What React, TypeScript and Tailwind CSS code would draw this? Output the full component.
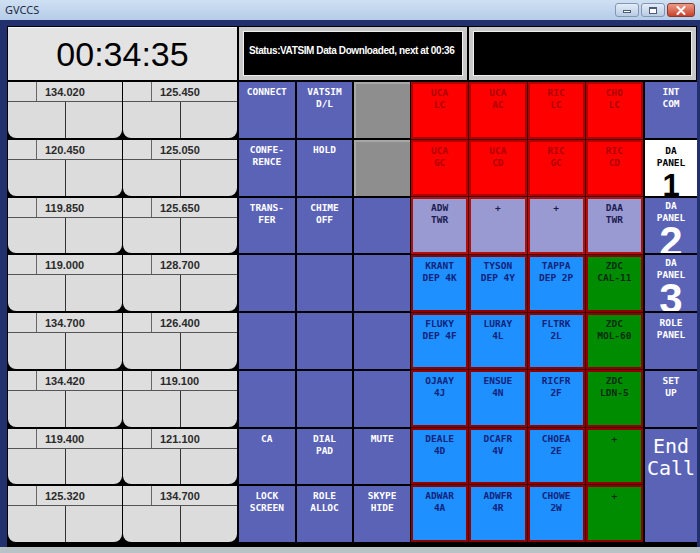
import React from "react";

const mono = "font-['DejaVu_Sans_Mono',monospace]";
const sans = "font-['Liberation_Sans',Arial,sans-serif]";

const freqs: [string, string][] = [
    ["134.020", "125.450"],
    ["120.450", "125.050"],
    ["119.850", "125.650"],
    ["119.000", "128.700"],
    ["134.700", "126.400"],
    ["134.420", "119.100"],
    ["119.400", "121.100"],
    ["125.320", "134.700"],
];

// function buttons, 3 per row; "gray" means an empty grey key
const funcs: string[] = [
    "CONNECT", "VATSIM\nD/L", "gray",
    "CONFE-\nRENCE", "HOLD", "gray",
    "TRANS-\nFER", "CHIME\nOFF", "",
    "", "", "",
    "", "", "",
    "", "", "",
    "CA", "DIAL\nPAD", "MUTE",
    "LOCK\nSCREEN", "ROLE\nALLOC", "SKYPE\nHIDE",
];

type Da = {label: string; kind: "red" | "lav" | "blue" | "green"};

const da: Da[] = [
    {label: "UCA\nLC", kind: "red"}, {label: "UCA\nAC", kind: "red"}, {label: "RIC\nLC", kind: "red"}, {label: "CHO\nLC", kind: "red"},
    {label: "UCA\nGC", kind: "red"}, {label: "UCA\nCD", kind: "red"}, {label: "RIC\nGC", kind: "red"}, {label: "RIC\nCD", kind: "red"},
    {label: "ADW\nTWR", kind: "lav"}, {label: "+", kind: "lav"}, {label: "+", kind: "lav"}, {label: "DAA\nTWR", kind: "lav"},
    {label: "KRANT\nDEP 4K", kind: "blue"}, {label: "TYSON\nDEP 4Y", kind: "blue"}, {label: "TAPPA\nDEP 2P", kind: "blue"}, {label: "ZDC\nCAL-11", kind: "green"},
    {label: "FLUKY\nDEP 4F", kind: "blue"}, {label: "LURAY\n4L", kind: "blue"}, {label: "FLTRK\n2L", kind: "blue"}, {label: "ZDC\nMOL-60", kind: "green"},
    {label: "OJAAY\n4J", kind: "blue"}, {label: "ENSUE\n4N", kind: "blue"}, {label: "RICFR\n2F", kind: "blue"}, {label: "ZDC\nLDN-5", kind: "green"},
    {label: "DEALE\n4D", kind: "blue"}, {label: "DCAFR\n4V", kind: "blue"}, {label: "CHOEA\n2E", kind: "blue"}, {label: "+", kind: "green"},
    {label: "ADWAR\n4A", kind: "blue"}, {label: "ADWFR\n4R", kind: "blue"}, {label: "CHOWE\n2W", kind: "blue"}, {label: "+", kind: "green"},
];

const daStyle = {
    red: "bg-[#ff0000] text-[#b00000] border-[#b00000]",
    lav: "bg-[#9a9ad2] text-[#1c1c50] border-[#b01010]",
    blue: "bg-[#1e90ff] text-[#13237a] border-[#900000]",
    green: "bg-[#008c00] text-[#0b2e12] border-[#900000]",
};

function FreqCell({freq}: {freq: string}) {
    return (
        <div className="flex flex-col">
            <div className="flex h-[20px] bg-[#dedede] border-b border-[#555]">
                <div className="w-[29px] border-r border-[#666]"/>
                <div className={`flex-1 pl-[8px] text-[11px] font-bold leading-[20px] text-[#2a2a2a] ${sans}`}>
                    {freq}
                </div>
            </div>
            <div className="flex flex-1">
                <div className="flex-1 bg-[#dcdcdc] border-r border-[#333] rounded-bl-[8px]"/>
                <div className="flex-1 bg-[#dcdcdc] rounded-br-[8px]"/>
            </div>
        </div>
    );
}

function FuncKey({label}: {label: string}) {
    if (label === "gray") {
        return <div className="bg-[#8e8e8e] border-t-2 border-l-2 border-[#a8a8a8]"/>;
    }
    return (
        <div className={`bg-[#5b63b7] text-white text-[9.5px] font-bold leading-[12px] text-center whitespace-pre-line pt-[4px] ${mono}`}>
            {label}
        </div>
    );
}

function PanelKey({n, active}: {n: string; active?: boolean}) {
    if (active) {
        return (
            <div className="overflow-hidden text-center bg-white text-black">
                <div className={`text-[9.5px] font-bold leading-[12px] pt-[5px] whitespace-pre-line ${mono}`}>
                    {"DA\nPANEL"}
                </div>
                <div className={`text-[31px] font-bold leading-none mt-[1px] ${sans}`}>{n}</div>
            </div>
        );
    }
    // the big digit runs past the bottom of the key, as in the original
    return (
        <div className="overflow-hidden text-center bg-[#5b63b7] text-white">
            <div className={`text-[9.5px] font-bold leading-[12px] pt-[2px] whitespace-pre-line ${mono}`}>
                {"DA\nPANEL"}
            </div>
            <div className={`text-[42px] font-bold leading-[35px] ${sans}`}>{n}</div>
        </div>
    );
}

function SideKey({label}: {label: string}) {
    return (
        <div
            className={`bg-[#5b63b7] text-white text-[9.5px] font-bold leading-[12px] text-center whitespace-pre-line pt-[4px] ${mono}`}>
            {label}
        </div>
    );
}

export default function App() {
    return (
        <div className="w-[700px] h-[553px] overflow-hidden bg-[#22306e] flex flex-col">
            {/* title bar */}
            <div className="h-[20px] flex items-center bg-gradient-to-b from-[#cfe0f3] to-[#b5cce8] pl-[5px] pr-[5px]">
                <span className="text-[11px] text-[#1d2b3c] font-['Noto_Sans',sans-serif]">GVCCS</span>
                <div className="ml-auto flex items-center gap-[2px]">
                    <div className="w-[24px] h-[14px] rounded-[3px] border border-[#8396b3] bg-gradient-to-b from-[#e4edf8] to-[#b9cbe2] flex items-center justify-center">
                        <div className="w-[8px] h-[3px] border border-[#4a5c78] bg-white mt-[3px]"/>
                    </div>
                    <div className="w-[24px] h-[14px] rounded-[3px] border border-[#8396b3] bg-gradient-to-b from-[#e4edf8] to-[#b9cbe2] flex items-center justify-center">
                        <div className="w-[8px] h-[7px] border border-[#4a5c78] border-t-2 bg-white"/>
                    </div>
                    <div className="w-[28px] h-[14px] rounded-[3px] border border-[#8a3a2a] bg-gradient-to-b from-[#ea9a88] to-[#c8412c] flex items-center justify-center">
                        <svg width="10" height="9" viewBox="0 0 10 9">
                            <path d="M1.5 1 L8.5 8 M8.5 1 L1.5 8" stroke="#fff" strokeWidth="2" strokeLinecap="round"/>
                        </svg>
                    </div>
                </div>
            </div>

            <div className="h-[6px]"/>

            <div className="flex">
                <div className="w-[7px] bg-[#22306e]"/>
                <div className="w-[690px] bg-black flex flex-col pl-[1px]">
                    {/* top row */}
                    <div className="flex h-[56px] pt-[1px] gap-[2px]">
                        <div className={`w-[229px] h-[53px] bg-[#e3e3e3] border-t border-[#f4f4f4] flex items-center justify-center text-[34px] text-black ${sans}`}>
                            00:34:35
                        </div>
                        <div className="w-[228px] h-[53px] bg-[#c9c9c9] p-[4px]">
                            <div className="h-full bg-black border border-[#efefef] px-[5px] pt-[4px]">
                                <span className={`text-[10px] font-bold text-white whitespace-nowrap tracking-[-0.4px] ${sans}`}>
                                    Status:VATSIM Data Downloaded, next at 00:36
                                </span>
                            </div>
                        </div>
                        <div className="w-[227px] h-[53px] bg-[#c9c9c9] p-[4px]">
                            <div className="h-full bg-black border border-[#efefef]"/>
                        </div>
                    </div>

                    {/* main panels */}
                    <div className="flex h-[460px]">
                        <div className="w-[231px] grid grid-cols-2 grid-rows-8 gap-x-[1px] gap-y-[2px] pr-[2px]">
                            {freqs.flatMap(([a, b], i) => [
                                <FreqCell key={`${i}a`} freq={a}/>,
                                <FreqCell key={`${i}b`} freq={b}/>,
                            ])}
                        </div>
                        <div className="w-[172px] grid grid-cols-3 grid-rows-8 gap-x-[2px] gap-y-[2px] pr-[1px]">
                            {funcs.map((f, i) => (
                                <FuncKey key={i} label={f}/>
                            ))}
                        </div>
                        <div className="w-[232px] grid grid-cols-4 grid-rows-8 gap-[1px] bg-[#420000]">
                            {da.map((d, i) => (
                                <div key={i}
                                     className={`border-[2px] text-[9.5px] font-bold leading-[12px] text-center whitespace-pre-line pt-[3px] ${mono} ${daStyle[d.kind]}`}>
                                    {d.label}
                                </div>
                            ))}
                        </div>
                        <div className="w-[54px] grid grid-rows-8 gap-y-[2px] pl-[2px]">
                            <SideKey label={"INT\nCOM"}/>
                            <PanelKey n="1" active/>
                            <PanelKey n="2"/>
                            <PanelKey n="3"/>
                            <SideKey label={"ROLE\nPANEL"}/>
                            <SideKey label={"SET\nUP"}/>
                            <div className={`row-span-2 bg-[#5b63b7] text-white text-[20px] leading-[22px] text-center whitespace-pre-line pt-[6px] ${mono}`}>
                                {"End\nCall"}
                            </div>
                        </div>
                    </div>
                    <div className="h-[5px]"/>
                </div>
                <div className="w-[3px] bg-[#22306e]"/>
            </div>
            <div className="flex-1 bg-[#b9c3c6]"/>
        </div>
    );
}
